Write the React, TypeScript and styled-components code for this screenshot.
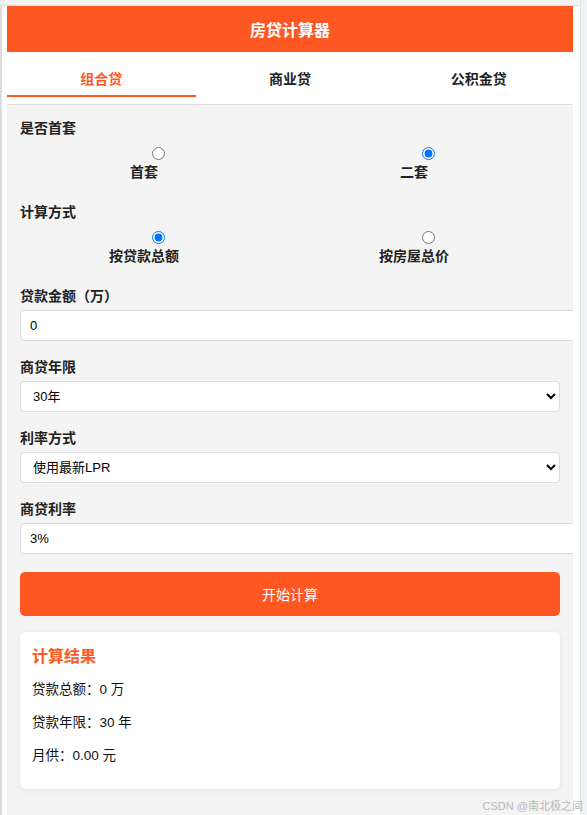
import React, {FC, useState} from 'react';
import styled, {createGlobalStyle} from 'styled-components';

const tabs = ['组合贷', '商业贷', '公积金贷']

const GlobalStyle = createGlobalStyle`
  html, body {
    margin: 0;
    padding: 0;
  }
  body {
    font-family: "Liberation Sans", "Noto Sans CJK SC", sans-serif;
    background: #fff;
    color: #333;
  }
`

interface ResultData {
  amount: number
  years: number
  monthly: number
}

const App: FC = () => {
  const [activeTab, setActiveTab] = useState(0)
  const [firstHome, setFirstHome] = useState('second')
  const [method, setMethod] = useState('loan')
  const [amount, setAmount] = useState('0')
  const [years, setYears] = useState('30')
  const [rateMode, setRateMode] = useState('lpr')
  const [rate, setRate] = useState('3%')
  const [result, setResult] = useState<ResultData>({amount: 0, years: 30, monthly: 0})

  const calcHandler = () => {
    const p = (parseFloat(amount) || 0) * 10000
    const n = Number(years) * 12
    const r = (parseFloat(rate) || 0) / 100 / 12
    let monthly = 0
    if (p > 0) {
      monthly = r === 0 ? p / n : p * r * Math.pow(1 + r, n) / (Math.pow(1 + r, n) - 1)
    }
    setResult({amount: parseFloat(amount) || 0, years: Number(years), monthly})
  }

  return (
    <Page>
      <GlobalStyle/>
      <Viewport>
        <TopStrip/>
        <Frame>
          <Calculator>
            <Header>房贷计算器</Header>

            <TabBar>
              {tabs.map((t, i) => (
                <Tab key={t} $active={i === activeTab} onClick={() => setActiveTab(i)}>
                  {t}
                </Tab>
              ))}
            </TabBar>

            <Form>
              <Group $radio>
                <Label>是否首套</Label>
                <RadioRow>
                  <Option>
                    <Radio type="radio" name="home" checked={firstHome === 'first'}
                           onChange={() => setFirstHome('first')}/>
                    <OptionText>首套</OptionText>
                  </Option>
                  <Option>
                    <Radio type="radio" name="home" checked={firstHome === 'second'}
                           onChange={() => setFirstHome('second')}/>
                    <OptionText>二套</OptionText>
                  </Option>
                </RadioRow>
              </Group>

              <Group $radio>
                <Label>计算方式</Label>
                <RadioRow>
                  <Option>
                    <Radio type="radio" name="method" checked={method === 'loan'}
                           onChange={() => setMethod('loan')}/>
                    <OptionText>按贷款总额</OptionText>
                  </Option>
                  <Option>
                    <Radio type="radio" name="method" checked={method === 'house'}
                           onChange={() => setMethod('house')}/>
                    <OptionText>按房屋总价</OptionText>
                  </Option>
                </RadioRow>
              </Group>

              <Group>
                <Label>贷款金额（万）</Label>
                <TextInput value={amount} onChange={e => setAmount(e.target.value)}/>
              </Group>

              <Group>
                <Label>商贷年限</Label>
                <Select value={years} onChange={e => setYears(e.target.value)}>
                  {[30, 25, 20, 15, 10, 5].map(y => <option key={y} value={y}>{y}年</option>)}
                </Select>
              </Group>

              <Group>
                <Label>利率方式</Label>
                <Select value={rateMode} onChange={e => setRateMode(e.target.value)}>
                  <option value="lpr">使用最新LPR</option>
                  <option value="base">使用基准利率</option>
                </Select>
              </Group>

              <Group>
                <Label>商贷利率</Label>
                <TextInput value={rate} onChange={e => setRate(e.target.value)}/>
              </Group>

              <CalcButton onClick={calcHandler}>开始计算</CalcButton>

              <ResultCard>
                <ResultTitle>计算结果</ResultTitle>
                <ResultLine>贷款总额：{result.amount} 万</ResultLine>
                <ResultLine>贷款年限：{result.years} 年</ResultLine>
                <ResultLine>月供：{result.monthly.toFixed(2)} 元</ResultLine>
              </ResultCard>
            </Form>
          </Calculator>
        </Frame>
      </Viewport>
      <ScrollTrack/>
      <Watermark>CSDN @南北极之间</Watermark>
    </Page>
  )
}

export default App

const Page = styled.div`
  position: relative;
  display: flex;
  min-height: 100vh;
  background: #fff;
`
const Viewport = styled.div`
  flex: 1;
  min-width: 0;
  display: flex;
  flex-direction: column;
`
const TopStrip = styled.div`
  height: 5px;
  background: #f3f3f3;
  border-bottom: 1px solid #dedede;
`
const Frame = styled.div`
  flex: 1;
  display: flex;
  flex-direction: column;
  border-left: 2px solid #dcdcdc;
  padding: 0 7px 0 5px;
`
const Calculator = styled.div`
  flex: 1;
  background: #f4f4f4;
  overflow: hidden;
`
const ScrollTrack = styled.div`
  width: 7px;
  box-sizing: border-box;
  background: #eef1f5;
  border-left: 1px solid #e0e3e8;
`
const Header = styled.div`
  height: 46px;
  display: flex;
  align-items: center;
  justify-content: center;
  background: #ff5722;
  color: #fff;
  font-size: 16px;
  font-weight: bold;
`
const TabBar = styled.div`
  display: flex;
  background: #fff;
  padding-bottom: 7px;
  border-bottom: 1px solid #ddd;
`
const Tab = styled.button<{ $active: boolean }>`
  flex: 1;
  padding: 17px 0 6px;
  border: none;
  border-bottom: 2px solid ${p => p.$active ? '#ff5722' : 'transparent'};
  background: none;
  font-family: inherit;
  font-size: 14px;
  font-weight: bold;
  line-height: 20px;
  color: ${p => p.$active ? '#ff5722' : '#222'};
  cursor: pointer;
`
const Form = styled.div`
  padding: 13px 13px 16px;
`
const Group = styled.div<{ $radio?: boolean }>`
  margin-bottom: ${p => p.$radio ? '20px' : '16px'};
`
const Label = styled.label`
  display: block;
  margin-bottom: 4px;
  font-size: 14px;
  font-weight: bold;
  line-height: 20px;
  color: #222;
`
const RadioRow = styled.div`
  display: grid;
  grid-template-columns: 1fr 1fr;
  padding-top: 5px;
`
const Option = styled.label`
  display: flex;
  flex-direction: column;
  align-items: center;
  cursor: pointer;
`
const Radio = styled.input`
  width: 13px;
  height: 13px;
  margin: 0 0 0 6px;
`
const OptionText = styled.span`
  margin: 2px 22px 0 0;
  font-size: 14px;
  font-weight: bold;
  line-height: 20px;
  color: #222;
`
const TextInput = styled.input`
  display: block;
  box-sizing: content-box;
  width: 100%;
  height: 15px;
  padding: 7px 9px;
  border: 1px solid #ddd;
  border-radius: 4px;
  background: #fff;
  font-family: inherit;
  font-size: 13px;
  color: #000;
  outline: none;
`
const Select = styled.select`
  display: block;
  box-sizing: border-box;
  width: 100%;
  height: 31px;
  padding: 0 8px;
  border: 1px solid #ddd;
  border-radius: 4px;
  background: #fff;
  font-family: inherit;
  font-size: 13px;
  color: #000;
  outline: none;
`
const CalcButton = styled.button`
  display: block;
  width: 100%;
  height: 44px;
  margin-top: 18px;
  border: none;
  border-radius: 5px;
  background: #ff5722;
  color: #fff;
  font-family: inherit;
  font-size: 14px;
  cursor: pointer;
`
const ResultCard = styled.div`
  margin-top: 16px;
  padding: 15px 12px 11px;
  background: #fff;
  border-radius: 6px;
  box-shadow: 0 1px 6px rgba(0, 0, 0, 0.08);
`
const ResultTitle = styled.h3`
  margin: 0 0 12px;
  font-size: 16px;
  font-weight: bold;
  line-height: 20px;
  color: #ff5722;
`
const ResultLine = styled.p`
  margin: 0 0 12px;
  font-size: 13.5px;
  line-height: 21px;
  color: #111;
`
const Watermark = styled.div`
  position: absolute;
  right: 4px;
  bottom: 2px;
  font-size: 11px;
  color: #b8b8b8;
  pointer-events: none;
`
